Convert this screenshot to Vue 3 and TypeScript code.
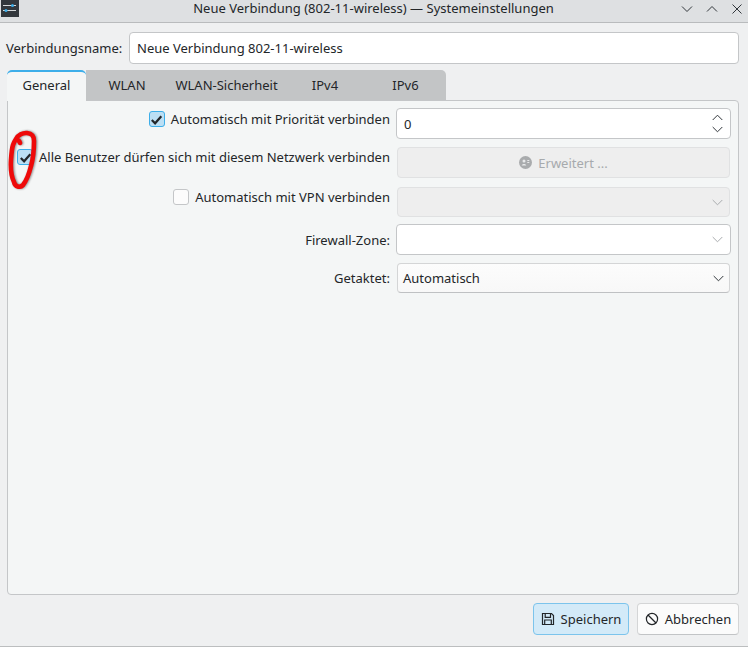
<script setup lang="ts">
const tabs = [
  { label: 'General', width: 79, active: true },
  { label: 'WLAN', width: 82, active: false },
  { label: 'WLAN-Sicherheit', width: 117, active: false },
  { label: 'IPv4', width: 80, active: false },
  { label: 'IPv6', width: 81, active: false },
]
</script>

<template>
  <div class="window">
    <header class="titlebar">
      <div class="appicon">
        <svg width="18" height="17" viewBox="0 0 18 17">
          <rect width="18" height="17" fill="#33383d" />
          <path d="M2 5.5h13M2 10.5h13" stroke="#d5d8da" stroke-width="1" />
          <circle cx="11.5" cy="5.5" r="1.5" fill="#3daee9" />
          <circle cx="5" cy="10.5" r="1.5" fill="#3daee9" />
        </svg>
      </div>
      <div class="title">Neue Verbindung (802-11-wireless) — Systemeinstellungen</div>
      <div class="wincontrols">
        <svg width="12" height="12" viewBox="0 0 12 12"><path d="M1 3.5l5 5 5-5" class="winstroke" /></svg>
        <svg width="12" height="12" viewBox="0 0 12 12"><path d="M1 8.5l5-5 5 5" class="winstroke" /></svg>
        <svg width="12" height="12" viewBox="0 0 12 12"><path d="M1.5 1.5l9 9M10.5 1.5l-9 9" class="winstroke" /></svg>
      </div>
    </header>

    <main class="content">
      <div class="namerow">
        <label class="namelabel">Verbindungsname:</label>
        <div class="input nameinput">Neue Verbindung 802-11-wireless</div>
      </div>

      <nav class="tabs">
        <div
          v-for="t in tabs"
          :key="t.label"
          class="tab"
          :class="{ active: t.active }"
          :style="{ width: t.width + 'px' }"
        >{{ t.label }}</div>
      </nav>

      <section class="panel">
        <div class="form">
          <div class="lab lab-top">
            <span class="check on"><svg width="13" height="13" viewBox="0 0 13 13"><path d="M1.8 7l3.3 3.3 6.2-7" class="tick" /></svg></span>
            <span class="checktext">Automatisch mit Priorität verbinden</span>
          </div>
          <div class="input field spin">
            <span>0</span>
            <span class="spinarrows">
              <svg width="11" height="7" viewBox="0 0 11 7"><path d="M.7 6l4.8-4.8L10.3 6" class="chev" /></svg>
              <svg width="11" height="7" viewBox="0 0 11 7"><path d="M.7 1l4.8 4.8L10.3 1" class="chev" /></svg>
            </span>
          </div>

          <div class="lab lab-mid">
            <span class="check on"><svg width="13" height="13" viewBox="0 0 13 13"><path d="M1.8 7l3.3 3.3 6.2-7" class="tick" /></svg></span>
            <span class="checktext">Alle Benutzer dürfen sich mit diesem Netzwerk verbinden</span>
          </div>
          <div class="disabled field btnlike">
            <svg width="13" height="13" viewBox="0 0 13 13">
              <circle cx="6.5" cy="6.5" r="6.5" fill="#a9abad" />
              <circle cx="5" cy="5" r="1.5" fill="#e8e9ea" />
              <path d="M2.8 9.5c0-2 4.4-2 4.4 0zM8.3 4h2v1h-2zM8.3 6h2v1h-2z" fill="#e8e9ea" />
            </svg>
            <span>Erweitert ...</span>
          </div>

          <div class="lab lab-top">
            <span class="check"></span>
            <span class="checktext">Automatisch mit VPN verbinden</span>
          </div>
          <div class="disabled field combo combo3">
            <svg width="11" height="7" viewBox="0 0 11 7"><path d="M.7 1l4.8 4.8L10.3 1" class="chev light" /></svg>
          </div>

          <div class="lab">Firewall-Zone:</div>
          <div class="input field combo">
            <svg width="11" height="7" viewBox="0 0 11 7"><path d="M.7 1l4.8 4.8L10.3 1" class="chev light" /></svg>
          </div>

          <div class="lab">Getaktet:</div>
          <div class="field selectbox">
            <span>Automatisch</span>
            <svg width="11" height="7" viewBox="0 0 11 7"><path d="M.7 1l4.8 4.8L10.3 1" class="chev" /></svg>
          </div>
        </div>
      </section>

      <footer class="actions">
        <button class="btn primary">
          <svg width="14" height="14" viewBox="0 0 14 14" fill="none" stroke="#232629" stroke-width="1.2">
            <path d="M1.5 1.5h9l2 2v9h-11z" />
            <path d="M4.2 1.5v3.8h5.3v-3.8M3.7 12.5v-4.5h6.6v4.5" />
          </svg>
          <span>Speichern</span>
        </button>
        <button class="btn">
          <svg width="14" height="14" viewBox="0 0 14 14" fill="none" stroke="#232629" stroke-width="1.2">
            <circle cx="7" cy="7" r="5.6" />
            <path d="M3 3l8 8" />
          </svg>
          <span>Abbrechen</span>
        </button>
      </footer>
    </main>

    <svg class="scribble" width="50" height="72" viewBox="0 0 50 72" fill="none">
      <path
        d="M20 21C19 17 17 19 16 17C18 13 23 10.500 27 11C31 11.500 34 13 34 19C34 28 33 37 31 44C29 52 27 58 23 63C20 66 15 65 14 60C11 54 10.500 46 11 38C11.500 30 12 26 13 23C14 20 15 18.500 16 17"
        stroke="#ee0a0a"
        stroke-width="4.600"
        stroke-linecap="round"
        stroke-linejoin="round"
      />
    </svg>
  </div>
</template>

<style>
html, body { margin: 0; padding: 0; background: #eff0f1; }
</style>

<style scoped>
.window {
  position: relative;
  width: 748px;
  height: 647px;
  overflow: hidden;
  background: #eff0f1;
  color: #232629;
  font-family: "Noto Sans", sans-serif;
  font-size: 13px;
  line-height: 18px;
  box-sizing: border-box;
  border-bottom: 1px solid #bcbebf;
}
.titlebar {
  height: 23px;
  box-sizing: border-box;
  border-bottom: 1px solid #b9bbbd;
  background: #dee0e2;
  display: grid;
  grid-template-columns: 78px 1fr 78px;
  align-items: center;
}
.appicon { height: 22px; display: flex; align-items: flex-start; padding-left: 1px; }
.title { text-align: center; white-space: nowrap; margin-left: -1px; padding-bottom: 5px; line-height: 17px; }
.wincontrols { display: flex; gap: 13px; padding-left: 11px; padding-bottom: 5px; }
.winstroke { fill: none; stroke: #31363b; stroke-width: 1; }

.content { padding: 9px 9px 0 7px; display: flex; flex-direction: column; }
.namerow { display: flex; align-items: center; height: 32px; }
.namelabel { width: 122px; margin-left: -1px; flex: none; }
.input {
  box-sizing: border-box;
  background: #fff;
  border: 1px solid #c4c6c8;
  border-radius: 4px;
}
.nameinput { flex: 1; height: 32px; line-height: 30px; padding-left: 7px; margin-left: 1px; }

.tabs { display: flex; margin-top: 6px; height: 31px; position: relative; z-index: 1; }
.tab {
  box-sizing: border-box;
  background: #c3c5c6;
  text-align: center;
  line-height: 30px;
  height: 30px;
}
.tab:last-child { border-top-right-radius: 5px; }
.tab.active {
  height: 31px;
  background: #f4f6f6;
  border-top: 2px solid #3daee9;
  border-radius: 5px 5px 0 0;
  line-height: 26px;
}

.panel {
  box-sizing: border-box;
  height: 495px;
  margin-top: -1px;
  background: #f4f6f6;
  border: 1px solid #c4c6c8;
  border-radius: 0 4px 4px 4px;
  padding: 7px 7px 0 0;
}
.form {
  display: grid;
  grid-template-columns: 388px 1fr;
  grid-template-rows: 31px 31px 30px 31px 30px;
  row-gap: 8px;
}
.lab {
  display: flex;
  align-items: center;
  justify-content: flex-end;
  padding-right: 6px;
  white-space: nowrap;
}
.lab-top { align-items: flex-start; padding-top: 2px; }
.lab-mid { align-items: flex-start; padding-top: 1px; }
.check {
  box-sizing: border-box;
  width: 16px;
  height: 16px;
  margin-top: 1px;
  border: 1px solid #c4c6c8;
  border-radius: 3px;
  background: #fcfcfc;
  display: inline-flex;
  align-items: center;
  justify-content: center;
  flex: none;
}
.check.on { background: #bcdff4; border-color: #3daee9; }
.tick { fill: none; stroke: #232629; stroke-width: 2.200; }
.checktext { margin-left: 6px; }

.field { box-sizing: border-box; display: flex; align-items: center; justify-content: space-between; }
.spin { padding: 0 7px 0 7px; }
.spinarrows { display: flex; flex-direction: column; gap: 5px; }
.spinarrows svg { display: block; }
.chev { fill: none; stroke: #31363b; stroke-width: 1; }
.chev.light { stroke: #a9acae; }
.disabled {
  background: #eeeeee;
  border: 1px solid #e0e1e2;
  border-radius: 4px;
  margin-left: 1px;
  margin-right: 1px;
  color: #a7aaad;
}
.btnlike { justify-content: center; gap: 6px; }
.combo { justify-content: flex-end; padding-right: 7px; }
.combo3 { margin-top: 1px; margin-bottom: -1px; padding-right: 6px; }
.selectbox {
  background: linear-gradient(#fcfcfc, #f8f8f8);
  border: 1px solid #d4d5d6;
  border-bottom-color: #bfc1c3;
  border-radius: 4px;
  margin: 0 1px;
  padding: 0 5px 0 5px;
}

.actions { display: flex; justify-content: flex-end; gap: 8px; margin-top: 8px; }
.btn {
  box-sizing: border-box;
  height: 32px;
  width: 102px;
  padding: 0;
  border: 1px solid #d4d5d6;
  border-bottom-color: #c2c4c6;
  border-radius: 4px;
  background: #fbfbfb;
  color: #232629;
  font: inherit;
  display: flex;
  align-items: center;
  justify-content: center;
  gap: 6px;
}
.btn.primary { width: 96px; background: #d3eaf8; border-color: #7cc4ec; }

.scribble {
  position: absolute;
  left: 0;
  top: 122px;
  pointer-events: none;
  filter: drop-shadow(1px 0 1px rgba(0, 0, 0, 0.45));
}
</style>
